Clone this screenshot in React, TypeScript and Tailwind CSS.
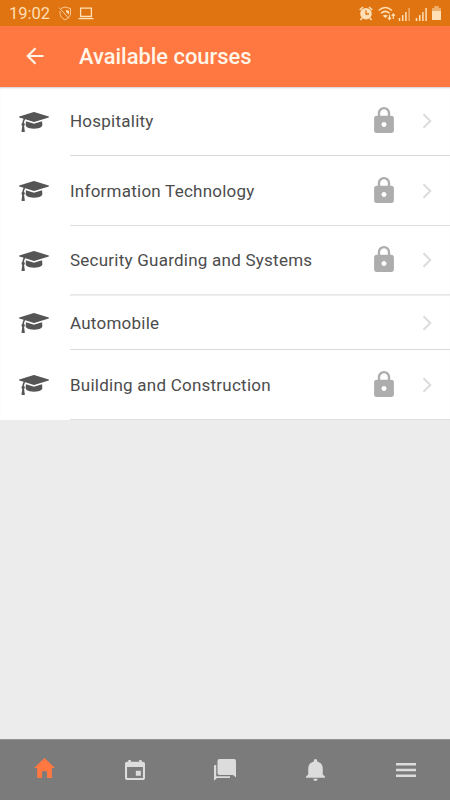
const courses = [
  { name: 'Hospitality', locked: true, height: 'h-[69px]', line: 'border-b border-[#dadada]' },
  { name: 'Information Technology', locked: true, height: 'h-[70px]', line: 'border-b border-[#dedede]' },
  { name: 'Security Guarding and Systems', locked: true, height: 'h-[69px]', line: 'border-b border-[#e8e8e8]' },
  { name: 'Automobile', locked: false, height: 'h-[55px]', line: 'border-y border-t-[#ededed] border-b-[#dadada]' },
  { name: 'Building and Construction', locked: true, height: 'h-[70px]', line: 'border-b border-[#dedede]' },
];

function CapIcon() {
  return (
    <svg className="ml-[19px] h-5 w-[30px] shrink-0" viewBox="0 -8 2304 1536" fill="#555">
      <path d="M1774 700l18 316q4 69-82 128t-235 93.500-323 34.500-323-34.500-235-93.500-82-128l18-316 574 181q22 7 48 7t48-7zm530-324q0 23-22 31l-1120 352q-4 1-10 1t-10-1l-652-206q-43 34-71 111.500t-34 178.500q63 36 63 109 0 69-58 107l58 433q2 14-8 25-9 11-24 11h-192q-15 0-24-11-10-11-8-25l58-433q-58-38-58-107 0-73 65-111 11-207 98-330l-333-104q-22-8-22-31t22-31l1120-352q4-1 10-1t10 1l1120 352q22 8 22 31z" />
    </svg>
  );
}

function LockIcon() {
  return (
    <svg className="mb-[2px] mr-[28px] h-[26px] w-5 shrink-0" viewBox="96 46 320 420" fill="#adadad">
      <path d="M376 186h-20v-40c0-55-45-100-100-100S156 91 156 146v40h-20c-22.002 0-40 17.998-40 40v200c0 22.002 17.998 40 40 40h240c22.002 0 40-17.998 40-40V226c0-22.002-17.998-40-40-40zM256 368c-22.002 0-40-17.998-40-40s17.998-40 40-40 40 17.998 40 40-17.998 40-40 40zm62.002-182H193.998v-40c0-34.004 28.003-62.002 62.002-62.002 34.004 0 62.002 27.998 62.002 62.002v40z" />
    </svg>
  );
}

function StatusBar() {
  return (
    <div className="flex h-[26px] shrink-0 items-center bg-[#df7411] text-[#ffdfb5]">
      <span className="ml-[9px] mt-[2px] w-[49px] text-[16.500px] leading-none">19:02</span>
      <svg className="mt-px h-[15px] w-[14px]" viewBox="0 0 14 15" fill="none" stroke="currentColor" strokeWidth="1">
        <path d="M3 2.500L7 1l5.500 1.500v4.500c0 3-2 5-5.500 7-3-1.500-5-4-5-6.500V5M1 1.500l10 11" opacity=".8" />
        <path d="M8 4l3 .7v3.800L8 6z" fill="currentColor" stroke="none" />
      </svg>
      <svg className="ml-[6px] mt-px h-[13px] w-4" viewBox="0 0 16 13" fill="none" stroke="currentColor" strokeWidth="1.300">
        <path d="M2.600 1.200h10.800v8.300H2.600zM.5 11.700h15" />
      </svg>
      <div className="ml-auto mr-[9px] flex items-center">
        <svg className="h-[15px] w-[14px]" viewBox="0 0 14 15" fill="currentColor">
          <circle cx="7" cy="7.700" r="5.800" />
          <path d="M.7 4L4 1M10 1l3.300 3M3 12l-1.500 2M11 12l1.500 2" stroke="currentColor" strokeWidth="1.600" />
          <path d="M7 4.300v3.700h3" fill="none" stroke="#df7411" strokeWidth="1.300" />
        </svg>
        <svg className="ml-[5px] h-[15px] w-[18px]" viewBox="0 0 18 15" fill="none" stroke="currentColor" strokeWidth="1.500">
          <path d="M.7 4.500Q7.300 -1.500 14 4.500M3 7.300Q7.300 3.500 11.600 7.300" />
          <path d="M4.800 9.700Q7.300 7.700 9.800 9.700L7.300 12z" fill="currentColor" stroke="none" />
          <path d="M11.500 8.500V13.500M9.900 11.700l1.600 1.800 1.600-1.800M15.300 13V8M13.700 9.800L15.300 8l1.600 1.800" strokeWidth="1.200" />
        </svg>
        <svg className="ml-[2px] mt-px h-[14px] w-[13px]" viewBox="0 0 13 14" stroke="currentColor" strokeWidth="1.500">
          <path d="M1.500 14v-3M4.700 14V8M7.900 14V5" /><path d="M11.100 14V1" opacity=".55" />
        </svg>
        <svg className="ml-[4px] mt-px h-[14px] w-[13px]" viewBox="0 0 13 14" stroke="currentColor" strokeWidth="1.500">
          <path d="M1.500 14v-3M4.700 14V8M7.900 14V5M11.100 14V1" />
        </svg>
        <svg className="ml-[4px] h-[14px] w-[9px]" viewBox="0 0 9 14" fill="currentColor">
          <path d="M2.500 0h4v2H9v12H0V2h2.500z" /><path d="M2.500 0h4v2H9v3H0V2h2.500z" fill="#df7411" opacity=".45" />
        </svg>
      </div>
    </div>
  );
}

export default function App() {
  return (
    <div className="flex h-[800px] w-[450px] flex-col overflow-hidden bg-[#ececec] font-['Roboto',sans-serif]">
      <StatusBar />
      <header className="flex h-[61px] shrink-0 items-center bg-[#ff7842] text-[#fff5e8]">
        <svg className="-mt-px ml-[26px] h-[18px] w-[18px]" viewBox="0 0 18 18" fill="none" stroke="currentColor" strokeWidth="2.200">
          <path d="M17.500 9H2M9.500 1.300L1.800 9l7.700 7.700" />
        </svg>
        <h1 className="ml-[35px] text-[21.900px] font-medium leading-none">Available courses</h1>
      </header>
      <main className="flex-1">
        <ul className="bg-white shadow-[inset_0_2px_2px_-1px_#d4cdcd]">
          {courses.map((course) => (
            <li key={course.name} className={`flex items-center ${course.height}`}>
              <CapIcon />
              <div className={`ml-[21px] flex h-full flex-1 items-center ${course.line}`}>
                <span className="flex-1 text-[17px] leading-[18px] tracking-[0.24px] text-[#4c4c4c]">{course.name}</span>
                {course.locked && <LockIcon />}
                <svg className="mr-[18px] h-4 w-[10px]" viewBox="0 0 10 16" fill="none" stroke="#dcdcdc" strokeWidth="2">
                  <path d="M1.500 1.200L8.300 8l-6.800 6.800" />
                </svg>
              </div>
            </li>
          ))}
        </ul>
      </main>
      <nav className="grid h-[61px] shrink-0 grid-cols-5 items-center justify-items-center border-t border-[#949494] bg-[#7b7b7b] text-[#dcdcdc]">
        <svg className="-mt-1 mr-px h-5 w-[21px]" viewBox="48 64 416 384" preserveAspectRatio="none" fill="#ff7842">
          <path d="M208 448V320h96v128h97.600V256H464L256 64 48 256h62.400v192z" />
        </svg>
        <svg className="h-5 w-5" viewBox="64 64 384 384" fill="currentColor">
          <path d="M368 272h-96v96h96v-96zM336 64v32H176V64h-48v32h-24c-22 0-40 18-40 40v272c0 22 18 40 40 40h304c22 0 40-18 40-40V136c0-22-18-40-40-40h-24V64h-48zm72 344H104V196h304v212z" />
        </svg>
        <svg className="h-[22px] w-[22px]" viewBox="0 0 22 22" fill="currentColor">
          <path d="M5.500 0H20q2 0 2 2v16.500L19 16H5.500q-2 0-2-2V2q0-2 2-2z" />
          <path d="M1 6h1.200v11.200H16V19H3L0 21.800V7Q0 6 1 6z" />
        </svg>
        <svg className="h-[22px] w-[19px]" viewBox="80 48 352 416" preserveAspectRatio="none" fill="currentColor">
          <path d="M256 464c22.779 0 41.411-18.719 41.411-41.600h-82.823c0 22.881 18.633 41.600 41.412 41.600zm134.589-124.800V224.800c0-63.440-44.516-117.518-103.530-131.041V79.200c0-17.682-13.457-31.200-31.059-31.200s-31.059 13.518-31.059 31.200v14.559c-59.015 13.523-103.530 67.601-103.530 131.041v114.400L80 380.800v20.800h352v-20.800l-41.411-41.600z" />
        </svg>
        <svg className="ml-px h-[14px] w-5" viewBox="0 0 20 14" fill="currentColor">
          <path d="M0 0h20v2.500H0zM0 5.700h20v2.500H0zM0 11.400h20v2.500H0z" />
        </svg>
      </nav>
    </div>
  );
}
